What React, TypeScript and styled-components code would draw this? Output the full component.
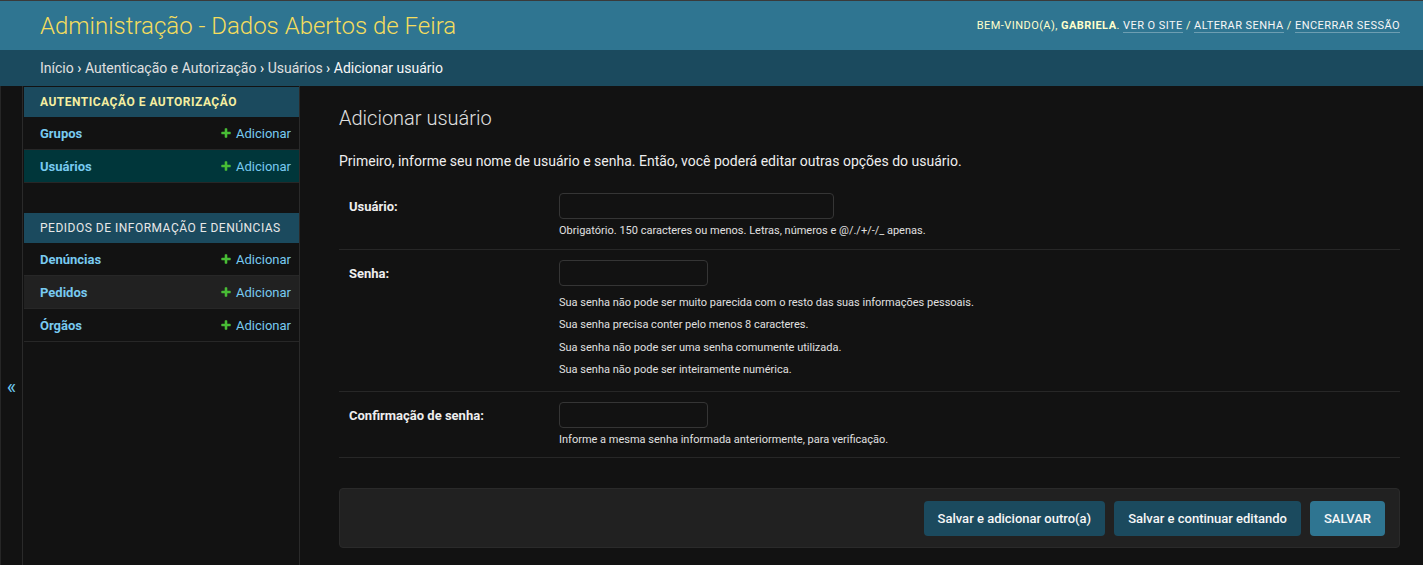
import React from 'react';
import styled, { createGlobalStyle } from 'styled-components';

const GlobalStyle = createGlobalStyle`
  html, body {
    margin: 0;
    padding: 0;
    background: #121212;
    color: #eeeeee;
    font-family: Roboto, "Liberation Sans", Arial, sans-serif;
  }
  * {
    box-sizing: border-box;
  }
`;

const Page = styled.div`
  min-height: 100vh;
  display: flex;
  flex-direction: column;
  border-top: 1px solid #3a3a3a;
`;

const Header = styled.header`
  height: 49px;
  padding: 0 23px 0 40px;
  background: #2f7591;
  display: flex;
  align-items: center;
  justify-content: space-between;
`;

const Branding = styled.h1`
  margin: 0;
  font-size: 24px;
  font-weight: 300;
  color: #f5dd5d;
  line-height: 28px;
`;

const UserTools = styled.div`
  font-size: 11px;
  letter-spacing: 0.45px;
  text-transform: uppercase;
  color: #ffffcc;
  line-height: 16px;

  strong {
    font-weight: 700;
  }
`;

const ToolLink = styled.a`
  color: #f7f7f7;
  text-decoration: none;
  border-bottom: 1px solid rgba(255, 255, 255, 0.3);
`;

const Breadcrumbs = styled.nav`
  height: 36px;
  padding: 0 40px;
  background: #1b4a5e;
  display: flex;
  align-items: center;
  font-size: 14px;
  color: #f7f7f7;

  a {
    color: #e0e0e0;
    text-decoration: none;
  }
`;

const Main = styled.div`
  flex: 1;
  display: flex;
  border-left: 1px solid #262626;
`;

const ToggleNav = styled.button`
  flex: 0 0 22px;
  width: 22px;
  padding: 291px 0 0;
  border: 0;
  border-right: 1px solid #2a2a2a;
  background: #121212;
  color: #6fc8ef;
  font-size: 20px;
  line-height: 20px;
  font-family: Roboto, "Liberation Sans", Arial, sans-serif;
  text-align: center;
  display: flex;
  justify-content: center;
  align-items: flex-start;
`;

const Sidebar = styled.nav`
  flex: 0 0 277px;
  padding: 1px 0 0 1px;
  border-right: 1px solid #2a2a2a;
`;

const Module = styled.div`
  margin-bottom: 30px;
`;

const Caption = styled.div<{ $current?: boolean }>`
  height: 30px;
  padding: 0 16px;
  background: #1b4a5e;
  display: flex;
  align-items: center;
  white-space: nowrap;
  font-size: 12px;
  letter-spacing: 0.5px;
  text-transform: uppercase;
  font-weight: ${(p) => (p.$current ? 700 : 400)};
  color: ${(p) => (p.$current ? '#f5eea0' : '#e8e8e8')};
`;

const ModelRow = styled.div<{ $selected?: boolean; $hover?: boolean }>`
  height: 33px;
  padding: 0 8px 0 16px;
  border-bottom: 1px solid #272727;
  display: flex;
  align-items: center;
  justify-content: space-between;
  font-size: 13px;
  background: ${(p) => (p.$selected ? '#00363a' : p.$hover ? '#212121' : 'transparent')};
`;

const ModelLink = styled.a`
  color: #78caf0;
  font-weight: 700;
  text-decoration: none;
`;

const AddLink = styled.a`
  color: #78caf0;
  text-decoration: none;
  display: flex;
  align-items: center;
  gap: 4px;

  svg {
    width: 12px;
    height: 12px;
  }
`;

const Content = styled.main`
  flex: 1;
  padding: 20px 23px 16px 39px;
`;

const Title = styled.h1`
  margin: 0 0 21px;
  font-size: 20px;
  line-height: 24px;
  font-weight: 300;
  color: #e0e0e0;
`;

const Intro = styled.p`
  margin: 0 0 12px;
  font-size: 14px;
  line-height: 20px;
  color: #eeeeee;
`;

const FormRow = styled.div<{ $bottom?: number }>`
  display: flex;
  padding: 10px 10px ${(p) => p.$bottom ?? 10}px;
  border-bottom: 1px solid #272727;
`;

const Label = styled.label`
  flex: 0 0 210px;
  font-size: 13px;
  font-weight: 700;
  line-height: 26px;
  padding-top: 1px;
  color: #eeeeee;
`;

const Field = styled.div`
  display: flex;
  flex-direction: column;
`;

const TextInput = styled.input<{ $w: number }>`
  width: ${(p) => p.$w}px;
  height: 26px;
  background: #121212;
  border: 1px solid #353535;
  border-radius: 4px;
  color: #eeeeee;
  padding: 2px 6px;
  outline: none;
`;

const Help = styled.div`
  margin-top: 4px;
  font-size: 11px;
  line-height: 16px;
  color: #e0e0e0;
`;

const HelpList = styled.ul`
  margin: 6px 0 0;
  padding: 0;
  list-style: none;
  font-size: 11px;
  line-height: 22.3px;
  color: #e0e0e0;
`;

const SubmitRow = styled.div`
  margin-top: 30px;
  height: 60px;
  padding: 0 14px;
  background: #212121;
  border: 1px solid #2a2a2a;
  border-radius: 4px;
  display: flex;
  align-items: center;
  justify-content: flex-end;
  gap: 9px;
`;

const Button = styled.button<{ $default?: boolean }>`
  height: 35px;
  padding: 0 14px;
  border: 0;
  border-radius: 4px;
  background: ${(p) => (p.$default ? '#2f7591' : '#1b4a5e')};
  color: #f7f7f7;
  font-family: Roboto, "Liberation Sans", Arial, sans-serif;
  font-size: 13px;
  font-weight: 500;
  text-transform: ${(p) => (p.$default ? 'uppercase' : 'none')};
`;

const PlusIcon = () => (
  <svg viewBox="0 0 1792 1792" aria-hidden="true">
    <path
      fill="#48bd35"
      d="M1600 796v192q0 40-28 68t-68 28h-416v416q0 40-28 68t-68 28h-192q-40 0-68-28t-28-68v-416h-416q-40 0-68-28t-28-68v-192q0-40 28-68t68-28h416v-416q0-40 28-68t68-28h192q40 0 68 28t28 68v416h416q40 0 68 28t28 68z"
    />
  </svg>
);

const modules = [
  {
    name: 'Autenticação e Autorização',
    current: true,
    models: [
      { name: 'Grupos' },
      { name: 'Usuários', selected: true },
    ],
  },
  {
    name: 'Pedidos de Informação e Denúncias',
    models: [
      { name: 'Denúncias' },
      { name: 'Pedidos', hover: true },
      { name: 'Órgãos' },
    ],
  },
];

const passwordHelp = [
  'Sua senha não pode ser muito parecida com o resto das suas informações pessoais.',
  'Sua senha precisa conter pelo menos 8 caracteres.',
  'Sua senha não pode ser uma senha comumente utilizada.',
  'Sua senha não pode ser inteiramente numérica.',
];

export default function App() {
  return (
    <>
      <GlobalStyle />
      <Page>
        <Header>
          <Branding>Administração - Dados Abertos de Feira</Branding>
          <UserTools>
            Bem-vindo(a), <strong>Gabriela</strong>. <ToolLink href="#">Ver o site</ToolLink> /{' '}
            <ToolLink href="#">Alterar senha</ToolLink> / <ToolLink href="#">Encerrar sessão</ToolLink>
          </UserTools>
        </Header>
        <Breadcrumbs>
          <a href="#">Início</a>&nbsp;›&nbsp;<a href="#">Autenticação e Autorização</a>&nbsp;›&nbsp;
          <a href="#">Usuários</a>&nbsp;›&nbsp;Adicionar usuário
        </Breadcrumbs>
        <Main>
          <ToggleNav>«</ToggleNav>
          <Sidebar>
            {modules.map((m) => (
              <Module key={m.name}>
                <Caption $current={m.current}>{m.name}</Caption>
                {m.models.map((row) => (
                  <ModelRow key={row.name} $selected={row.selected} $hover={row.hover}>
                    <ModelLink href="#">{row.name}</ModelLink>
                    <AddLink href="#">
                      <PlusIcon />
                      Adicionar
                    </AddLink>
                  </ModelRow>
                ))}
              </Module>
            ))}
          </Sidebar>
          <Content>
            <Title>Adicionar usuário</Title>
            <Intro>
              Primeiro, informe seu nome de usuário e senha. Então, você poderá editar outras opções do
              usuário.
            </Intro>
            <FormRow>
              <Label>Usuário:</Label>
              <Field>
                <TextInput $w={275} />
                <Help>Obrigatório. 150 caracteres ou menos. Letras, números e @/./+/-/_ apenas.</Help>
              </Field>
            </FormRow>
            <FormRow $bottom={10}>
              <Label>Senha:</Label>
              <Field>
                <TextInput $w={149} type="password" />
                <HelpList>
                  {passwordHelp.map((t) => (
                    <li key={t}>{t}</li>
                  ))}
                </HelpList>
              </Field>
            </FormRow>
            <FormRow $bottom={9}>
              <Label>Confirmação de senha:</Label>
              <Field>
                <TextInput $w={149} type="password" />
                <Help>Informe a mesma senha informada anteriormente, para verificação.</Help>
              </Field>
            </FormRow>
            <SubmitRow>
              <Button>Salvar e adicionar outro(a)</Button>
              <Button>Salvar e continuar editando</Button>
              <Button $default>Salvar</Button>
            </SubmitRow>
          </Content>
        </Main>
      </Page>
    </>
  );
}
